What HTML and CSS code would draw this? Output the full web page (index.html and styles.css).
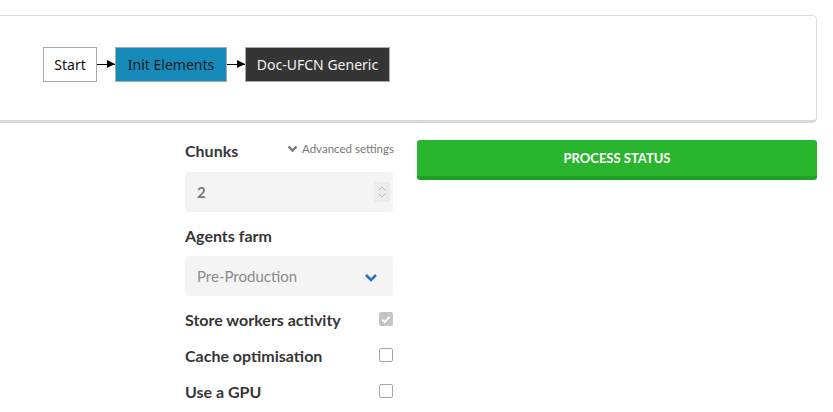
FILE: index.html
```html
<!DOCTYPE html>
<html lang="en">
<head>
    <meta charset="UTF-8">
    <title>Process configuration</title>
    <link rel="stylesheet" href="styles.css">
</head>
<body>
    <!-- Workflow diagram -->
    <div class="diagram-card">
        <div class="workflow">
            <div class="node node-start">Start</div>
            <div class="edge"></div>
            <div class="node node-init">Init Elements</div>
            <div class="edge"></div>
            <div class="node node-worker">Doc-UFCN Generic</div>
        </div>
    </div>

    <div class="settings">
        <div class="settings-form">
            <div class="field-head">
                <label class="field-label" for="chunks">Chunks</label>
                <a class="advanced-link" href="#">
                    <svg width="11" height="8" viewBox="0 0 11 8"><path d="M1.5 1.5 L5.5 5.5 L9.5 1.5" fill="none" stroke="#777" stroke-width="2.4"/></svg>
                    Advanced settings
                </a>
            </div>
            <div class="input-box">
                <span class="input-value">2</span>
                <span class="spinner">
                    <svg width="10" height="16" viewBox="0 0 10 16"><path d="M2 6 L5 3 L8 6 M2 10 L5 13 L8 10" fill="none" stroke="#bbb" stroke-width="1"/></svg>
                </span>
            </div>

            <label class="field-label farm-label" for="farm">Agents farm</label>
            <div class="input-box select-box">
                <span class="select-value">Pre-Production</span>
                <svg width="14" height="10" viewBox="0 0 14 10"><path d="M2 2 L7 7 L12 2" fill="none" stroke="#2d6cc8" stroke-width="2.6"/></svg>
            </div>

            <div class="check-list">
                <div class="check-row">
                    <span class="check-label">Store workers activity</span>
                    <span class="checkbox checked">
                        <svg width="10" height="9" viewBox="0 0 10 9"><path d="M1.2 4.6 L3.8 7 L8.8 1.5" fill="none" stroke="#fff" stroke-width="1.8"/></svg>
                    </span>
                </div>
                <div class="check-row">
                    <span class="check-label">Cache optimisation</span>
                    <span class="checkbox"></span>
                </div>
                <div class="check-row">
                    <span class="check-label">Use a GPU</span>
                    <span class="checkbox"></span>
                </div>
            </div>
        </div>

        <div class="settings-actions">
            <button type="button" class="status-button">PROCESS STATUS</button>
        </div>
    </div>
</body>
</html>
```

FILE: styles.css
```css
/* General body styles */
body {
    font-family: 'Lato', 'Liberation Sans', sans-serif;
    margin: 0;
    background-color: #ffffff;
    color: #363636;
}

/* Diagram card */
.diagram-card {
    margin: 15px 16px 0 -10px;
    height: 104px;
    border: 1px solid #dcdcdc;
    border-bottom: 3px solid #d8d8d8;
    border-radius: 0 5px 5px 0;
    display: flex;
    align-items: center;
}

.workflow {
    display: flex;
    align-items: center;
    margin-left: 52px;
    margin-top: -7px;
}

.node {
    height: 35px;
    box-sizing: border-box;
    padding: 0 8px;
    display: flex;
    align-items: center;
    justify-content: center;
    font-family: 'Noto Sans', sans-serif;
    font-size: 14px;
    border: 1px solid #a9a9a9;
}

.node-start {
    background-color: #fff;
    color: #111;
    width: 54px;
}

.node-init {
    background-color: #168bba;
    color: #0b1a22;
    width: 112px;
}

.node-worker {
    background-color: #353535;
    color: #f2f2f2;
    width: 145px;
}

.edge {
    width: 18px;
    height: 1px;
    background-color: #000;
    position: relative;
}

.edge::after {
    content: "";
    position: absolute;
    right: 0;
    top: -4px;
    border-width: 4.5px 0 4.5px 8px;
    border-style: solid;
    border-color: transparent transparent transparent #000;
}

/* Settings area */
.settings {
    display: flex;
    padding-left: 185px;
    margin-top: 16px;
    gap: 24px;
}

.settings-form {
    width: 208px;
}

.field-head {
    display: flex;
    justify-content: space-between;
    align-items: flex-start;
    margin-top: 1px;
}

.field-label {
    display: block;
    font-weight: bold;
    font-size: 16px;
    color: #363636;
    line-height: 22px;
}

.advanced-link {
    font-size: 11.5px;
    color: #777;
    text-decoration: none;
    display: flex;
    align-items: center;
    gap: 4px;
    line-height: 16px;
    margin-right: -1px;
    margin-top: 1px;
}

.input-box {
    margin-top: 10px;
    height: 40px;
    background-color: #f4f4f4;
    border-radius: 4px;
    display: flex;
    align-items: center;
    justify-content: space-between;
    padding: 0 3px 0 12px;
}

.input-value {
    font-weight: bold;
    font-size: 15px;
    color: #777;
}

.spinner {
    display: flex;
    align-items: center;
    justify-content: center;
    width: 16px;
    height: 20px;
    background-color: #ececec;
}

.farm-label {
    margin-top: 13px;
}

.select-box {
    margin-top: 9px;
    padding-right: 15px;
}

.select-value {
    font-size: 15px;
    color: #8a8a8a;
}

.select-box svg {
    margin-top: 3px;
}

/* Checkbox rows */
.check-list {
    margin-top: 5px;
}

.check-row {
    display: flex;
    justify-content: space-between;
    align-items: center;
    height: 36px;
}

.check-label {
    font-weight: bold;
    font-size: 16px;
    color: #363636;
}

.checkbox {
    width: 12px;
    height: 12px;
    border: 1px solid #a5a5a5;
    border-radius: 2px;
    background-color: #fff;
    display: flex;
    align-items: center;
    justify-content: center;
}

.checkbox.checked {
    background-color: #c4c4c4;
    border-color: #c4c4c4;
}

/* Action button */
.settings-actions {
    width: 400px;
    margin-top: 1px;
}

.status-button {
    width: 100%;
    height: 40px;
    border: none;
    border-bottom: 4px solid #20a025;
    border-radius: 3px;
    background-color: #2ab52e;
    color: #fff;
    font-family: inherit;
    font-weight: bold;
    font-size: 13px;
    cursor: pointer;
}
```
